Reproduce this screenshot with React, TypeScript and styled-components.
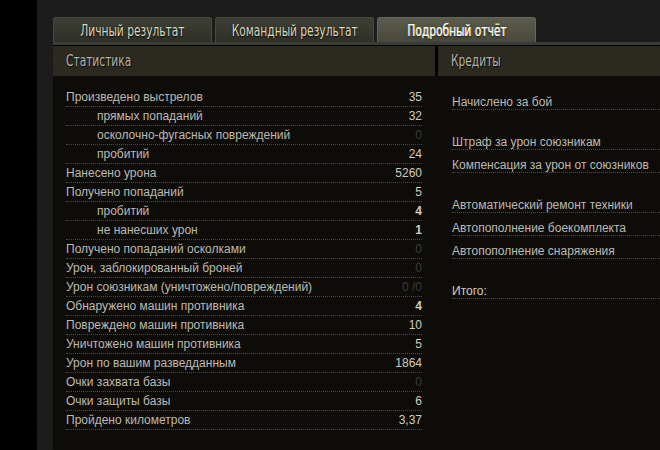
import React from 'react'
import styled, { createGlobalStyle } from 'styled-components'

const GlobalStyle = createGlobalStyle`
  html, body {
    margin: 0;
    padding: 0;
    background: #000;
  }
  body {
    font-family: "Liberation Sans", Arial, sans-serif;
    overflow: hidden;
  }
`

const Page = styled.div`
  display: flex;
  width: 660px;
  height: 450px;
  overflow: hidden;
`

const BlackStrip = styled.div`
  width: 37px;
  flex-shrink: 0;
  background: #000;
`

const Main = styled.div`
  flex: 1;
  display: flex;
  flex-direction: column;
  padding: 17px 0 0 16px;
  background-color: #1b1b1b;
  background-image: repeating-linear-gradient(
      45deg,
      rgba(255, 255, 255, 0.012) 0px,
      rgba(255, 255, 255, 0.012) 1px,
      transparent 1px,
      transparent 3px
    );
  min-width: 0;
`

const Tabs = styled.div`
  display: flex;
  gap: 3px;
  height: 25px;
`

const Tab = styled.div<{ $active?: boolean }>`
  width: 159px;
  box-sizing: border-box;
  display: flex;
  align-items: center;
  justify-content: center;
  border: 1px solid ${p => (p.$active ? '#66675a' : '#47483d')};
  border-bottom: none;
  border-radius: 3px 3px 0 0;
  background: ${p =>
    p.$active
      ? 'linear-gradient(#5b5c4d, #48493c)'
      : 'linear-gradient(#3e3f34, #2e3028)'};
  color: ${p => (p.$active ? '#ffffff' : '#d8d5bd')};
  text-shadow: ${p =>
    p.$active
      ? '1px 0 0 rgba(255, 200, 40, 0.7), -1px 0 0 rgba(90, 160, 255, 0.5), 0 1px 3px #000'
      : '0 1px 2px #000'};
  padding-top: 1px;
`

/* narrow game-style captions: glyphs squeezed horizontally */
const Caption = styled.span<{ $origin?: string }>`
  display: inline-block;
  font-family: "DejaVu Sans", "Liberation Sans", sans-serif;
  font-size: 15px;
  white-space: nowrap;
  transform: scaleX(0.71);
  transform-origin: ${p => p.$origin || 'center'};
`

const TabStrip = styled.div`
  height: 3px;
  background: #3b3b37;
  border-bottom: 1px solid #000;
`

const Panel = styled.div`
  flex: 1;
  display: flex;
  flex-direction: column;
  background: #0e0c09;
`

const HeaderRow = styled.div`
  display: flex;
  gap: 3px;
  background: #000;
  height: 30px;
`

const HeaderCell = styled.div<{ $width?: number }>`
  ${p => (p.$width ? `width: ${p.$width}px;` : 'flex: 1;')}
  flex-shrink: 0;
  box-sizing: border-box;
  display: flex;
  align-items: center;
  padding-left: 13px;
  background: #2c2a20;
  color: #b3b2a8;
  text-shadow: 1px 1px 2px #000;
`

const Body = styled.div`
  display: flex;
  flex: 1;
`

const StatsColumn = styled.div`
  width: 382px;
  flex-shrink: 0;
  box-sizing: border-box;
  padding: 12px 13px 0 13px;
`

const CreditsColumn = styled.div`
  flex: 1;
  box-sizing: border-box;
  padding: 11px 0 0 17px;
`

const StatRow = styled.div<{ $indent?: boolean }>`
  display: flex;
  justify-content: space-between;
  height: 19px;
  box-sizing: border-box;
  line-height: 19px;
  border-bottom: 1px dotted #4a4943;
  font-size: 12px;
  color: #bbbab1;
  padding-left: ${p => (p.$indent ? '31px' : '0')};
`

const StatValue = styled.span<{ $dim?: boolean; $bold?: boolean }>`
  color: ${p => (p.$dim ? '#3e3d38' : '#d0cdbb')};
  font-weight: ${p => (p.$bold ? 700 : 400)};
`

const CreditRow = styled.div<{ $total?: boolean }>`
  display: flex;
  align-items: flex-end;
  height: 23px;
  box-sizing: border-box;
  line-height: 14px;
  border-bottom: 1px dotted #4a4943;
  font-size: 12px;
  color: ${p => (p.$total ? '#d2cfb9' : '#bbbab1')};
  white-space: nowrap;
`

const Spacer = styled.div`
  height: 17px;
`

type Stat = { label: string; value: string; indent?: boolean; dim?: boolean; bold?: boolean }

const stats: Stat[] = [
  { label: 'Произведено выстрелов', value: '35' },
  { label: 'прямых попаданий', value: '32', indent: true },
  { label: 'осколочно-фугасных повреждений', value: '0', indent: true, dim: true },
  { label: 'пробитий', value: '24', indent: true },
  { label: 'Нанесено урона', value: '5260' },
  { label: 'Получено попаданий', value: '5' },
  { label: 'пробитий', value: '4', indent: true, bold: true },
  { label: 'не нанесших урон', value: '1', indent: true, bold: true },
  { label: 'Получено попаданий осколками', value: '0', dim: true },
  { label: 'Урон, заблокированный броней', value: '0', dim: true },
  { label: 'Урон союзникам (уничтожено/повреждений)', value: '0 /0', dim: true },
  { label: 'Обнаружено машин противника', value: '4', bold: true },
  { label: 'Повреждено машин противника', value: '10' },
  { label: 'Уничтожено машин противника', value: '5' },
  { label: 'Урон по вашим разведданным', value: '1864' },
  { label: 'Очки захвата базы', value: '0', dim: true },
  { label: 'Очки защиты базы', value: '6' },
  { label: 'Пройдено километров', value: '3,37' }
]

const creditGroups: string[][] = [
  ['Начислено за бой'],
  ['Штраф за урон союзникам', 'Компенсация за урон от союзников'],
  ['Автоматический ремонт техники', 'Автопополнение боекомплекта', 'Автопополнение снаряжения']
]

export default function App() {
  return (
    <>
      <GlobalStyle />
      <Page>
        <BlackStrip />
        <Main>
          <Tabs>
            <Tab><Caption>Личный результат</Caption></Tab>
            <Tab><Caption>Командный результат</Caption></Tab>
            <Tab $active><Caption>Подробный отчёт</Caption></Tab>
          </Tabs>
          <TabStrip />
          <Panel>
            <HeaderRow>
              <HeaderCell $width={382}><Caption $origin="left">Статистика</Caption></HeaderCell>
              <HeaderCell><Caption $origin="left">Кредиты</Caption></HeaderCell>
            </HeaderRow>
            <Body>
              <StatsColumn>
                {stats.map((s, i) => (
                  <StatRow key={i} $indent={s.indent}>
                    <span>{s.label}</span>
                    <StatValue $dim={s.dim} $bold={s.bold}>
                      {s.value}
                    </StatValue>
                  </StatRow>
                ))}
              </StatsColumn>
              <CreditsColumn>
                {creditGroups.map((group, gi) => (
                  <React.Fragment key={gi}>
                    {gi > 0 && <Spacer />}
                    {group.map(label => (
                      <CreditRow key={label}>{label}</CreditRow>
                    ))}
                  </React.Fragment>
                ))}
                <Spacer />
                <CreditRow $total>Итого:</CreditRow>
              </CreditsColumn>
            </Body>
          </Panel>
        </Main>
      </Page>
    </>
  )
}
